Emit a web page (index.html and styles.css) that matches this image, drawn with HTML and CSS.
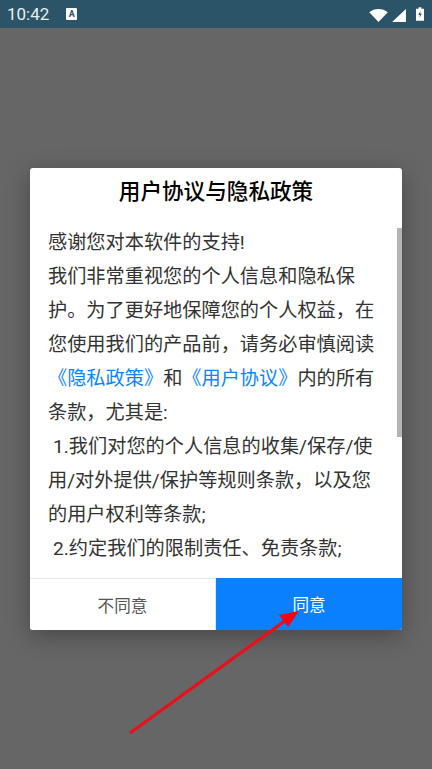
FILE: index.html
```html
<!DOCTYPE html>
<html lang="zh">
<head>
<meta charset="utf-8">
<title>用户协议与隐私政策</title>
<link rel="stylesheet" href="styles.css">
</head>
<body>
<div class="status">
  <span class="time">10:42</span>
  <span class="a-icon">A</span>
  <span class="spacer"></span>
  <svg class="ic-wifi" width="19" height="13" viewBox="0 0 20 14"><path d="M0 3.6C2.8 1.3 6.2 0 10 0s7.200 1.3 10 3.6L10 14z" fill="#fff"/></svg>
  <svg class="ic-signal" width="14" height="13" viewBox="0 0 15 14"><path d="M15 0V14H0z" fill="#fff"/></svg>
  <svg class="ic-batt" width="8" height="16" viewBox="0 0 9 15"><path d="M3 0h3v1.500h3V15H0V1.500h3z" fill="#fff"/><path d="M5.200 3.500 2.500 8.500h2L3.800 12l2.800-5h-2z" fill="#2b5468"/></svg>
</div>
<main class="scrim">
  <section class="dialog">
    <h1 class="title">用户协议与隐私政策</h1>
    <div class="body">
      <div class="text">
        <p>感谢您对本软件的支持!</p>
        <p>我们非常重视您的个人信息和隐私保护。为了更好地保障您的个人权益，在您使用我们的产品前，请务必审慎阅读<a>《隐私政策》</a>和<a>《用户协议》</a>内的所有条款，尤其是:</p>
        <p class="item">1.我们对您的个人信息的收集/保存/使用/对外提供/保护等规则条款，以及您的用户权利等条款;</p>
        <p class="item">2.约定我们的限制责任、免责条款;</p>
      </div>
      <div class="thumb"></div>
    </div>
    <div class="actions">
      <button class="btn no">不同意</button>
      <button class="btn yes">同意</button>
    </div>
  </section>
  <svg class="arrow" width="432" height="769" viewBox="0 0 432 769"><path d="M130 733 286 620" stroke="#e8101a" stroke-width="3.200" fill="none"/><path d="M299 611 279 615 288 627z" fill="#f5060f"/></svg>
</main>
</body>
</html>
```
FILE: styles.css
```css
* { box-sizing: border-box; }
html, body { margin: 0; padding: 0; }
body {
  width: 432px; height: 769px; overflow: hidden; position: relative;
  background: #666;
  font-family: Roboto, "Noto Sans CJK SC", sans-serif;
  display: flex; flex-direction: column;
}
.status {
  height: 28px; background: #2b5468; color: #e8eef1;
  display: flex; align-items: center; padding: 0 8px 0 7px; flex: none;
}
.time { font-size: 17px; font-weight: 400; }
.a-icon {
  width: 11px; height: 12px; margin-left: 17px; background: #fff; color: #2b5468;
  font: bold 9px/12px Roboto, sans-serif; text-align: center; border-radius: 1px;
}
.spacer { flex: 1; }
.ic-wifi, .ic-signal { margin-top: 2px; }
.ic-signal { margin-left: 4px; }
.ic-batt { margin-left: 10px; }
.scrim { flex: 1; padding: 140px 30px 0; }
.dialog {
  width: 372px; height: 462px; background: #fff; border-radius: 3px;
  display: flex; flex-direction: column; overflow: hidden;
  box-shadow: 0 6px 24px rgba(0,0,0,.3);
}
.title {
  margin: 0; height: 60px; flex: none; text-align: center;
  font-size: 21.6px; font-weight: 500; line-height: 47px; color: #000;
}
.body { position: relative; flex: 1; overflow: hidden; }
.text { margin-top: -2px; padding: 0 26px 0 18px; font-size: 19.2px; line-height: 34px; color: #333; }
.text p { margin: 0; }
.text a { color: #0a84ff; }
.item { text-indent: 5px; }
.thumb { position: absolute; right: 0; top: 0; width: 5px; height: 209px; background: #b4b4b4; }
.actions { height: 52px; flex: none; display: flex; }
.btn { width: 50%; border: 0; padding: 0; font: 16.6px Roboto, "Noto Sans CJK SC", sans-serif; }
.no { background: #fff; color: #555; border-top: 1px solid #e6e6e6; border-right: 1px solid #e6e6e6; }
.yes { background: #0a80ff; color: #fff; }
.arrow { position: absolute; left: 0; top: 0; pointer-events: none; }
```
